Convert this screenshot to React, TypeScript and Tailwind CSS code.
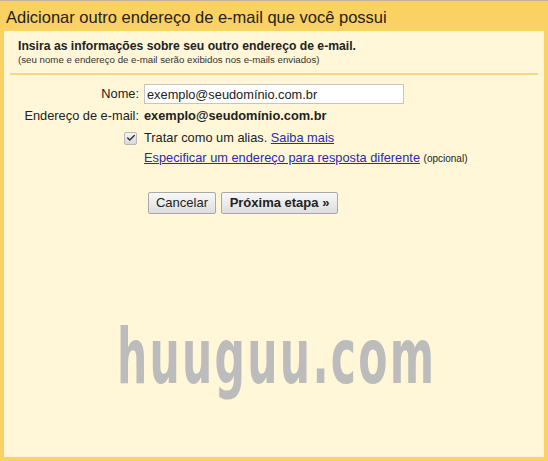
import { Check } from "lucide-react";

const font = { fontFamily: '"Liberation Sans", Arial, sans-serif' };

export default function App() {
  return (
    <div
      className="relative w-[548px] h-[461px] bg-[#fad163] border-t border-[#bdb59a] overflow-hidden"
      style={font}>
      <div className="h-[30px] px-[6px] flex items-center text-[16.5px] text-[#222] pt-[2px]">
        Adicionar outro endereço de e-mail que você possui
      </div>
      <div className="mx-[4px] h-[426px] bg-[#fff7d7]">
        <div className="px-[14px] pt-[8px] pb-[7px]">
          <div className="text-[12.2px] font-bold text-[#222] leading-[15px]">
            Insira as informações sobre seu outro endereço de e-mail.
          </div>
          <div className="text-[9.7px] text-[#333] leading-[12px]">
            (seu nome e endereço de e-mail serão exibidos nos e-mails enviados)
          </div>
        </div>
        <div className="mx-[6px] h-[2px] bg-[#f3d87c]" />

        <div className="grid grid-cols-[135px_1fr] gap-x-[5px] mt-[9px] text-[12.8px] text-[#222]">
          <div className="text-right pt-[2px] leading-[16px]">Nome:</div>
          <div>
            <input
              defaultValue="exemplo@seudomínio.com.br"
              className="w-[260px] h-[20px] bg-white border border-[#c4c4c4] px-[2px] text-[12.8px] text-[#222] outline-none"
              style={font}
            />
          </div>

          <div className="text-right mt-[4px] leading-[16px]">Endereço de e-mail:</div>
          <div className="mt-[4px] font-bold leading-[16px]">exemplo@seudomínio.com.br</div>

          <div className="flex justify-end items-center mt-[6px] pr-[2px]">
            <span className="w-[13px] h-[13px] rounded-[2px] border border-[#b8b8b8] bg-gradient-to-b from-[#f4f4f4] to-[#d8d8d8] flex items-center justify-center">
              <Check className="w-[10px] h-[10px] text-[#333]" strokeWidth={3.5} />
            </span>
          </div>
          <div className="mt-[6px] leading-[16px]">
            Tratar como um alias.{" "}
            <a href="#" className="text-[#2a2ab0] underline">
              Saiba mais
            </a>
          </div>

          <div />
          <div className="mt-[4px] leading-[16px]">
            <a href="#" className="text-[#2a2ab0] underline">
              Especificar um endereço para resposta diferente
            </a>{" "}
            <span className="text-[10px]">(opcional)</span>
          </div>

          <div />
          <div className="mt-[25px] flex gap-[5px] ml-[4px]">
            <button className="h-[22px] w-[68px] border border-[#a8a8a8] rounded-[2px] bg-gradient-to-b from-[#f8f8f8] to-[#dedede] text-[13px] text-[#222]">
              Cancelar
            </button>
            <button className="h-[22px] w-[117px] border border-[#a8a8a8] rounded-[2px] bg-gradient-to-b from-[#f8f8f8] to-[#dedede] text-[13px] font-bold text-[#222]">
              Próxima etapa »
            </button>
          </div>
        </div>
      </div>

      <div
        className="absolute left-[117px] top-[318px] text-[76px] font-bold text-[#bcbcbc] leading-none whitespace-nowrap origin-left [transform:scaleX(0.56)] tracking-[4px]"
        style={{ fontFamily: '"DejaVu Sans", sans-serif' }}>
        huuguu.com
      </div>
    </div>
  );
}
